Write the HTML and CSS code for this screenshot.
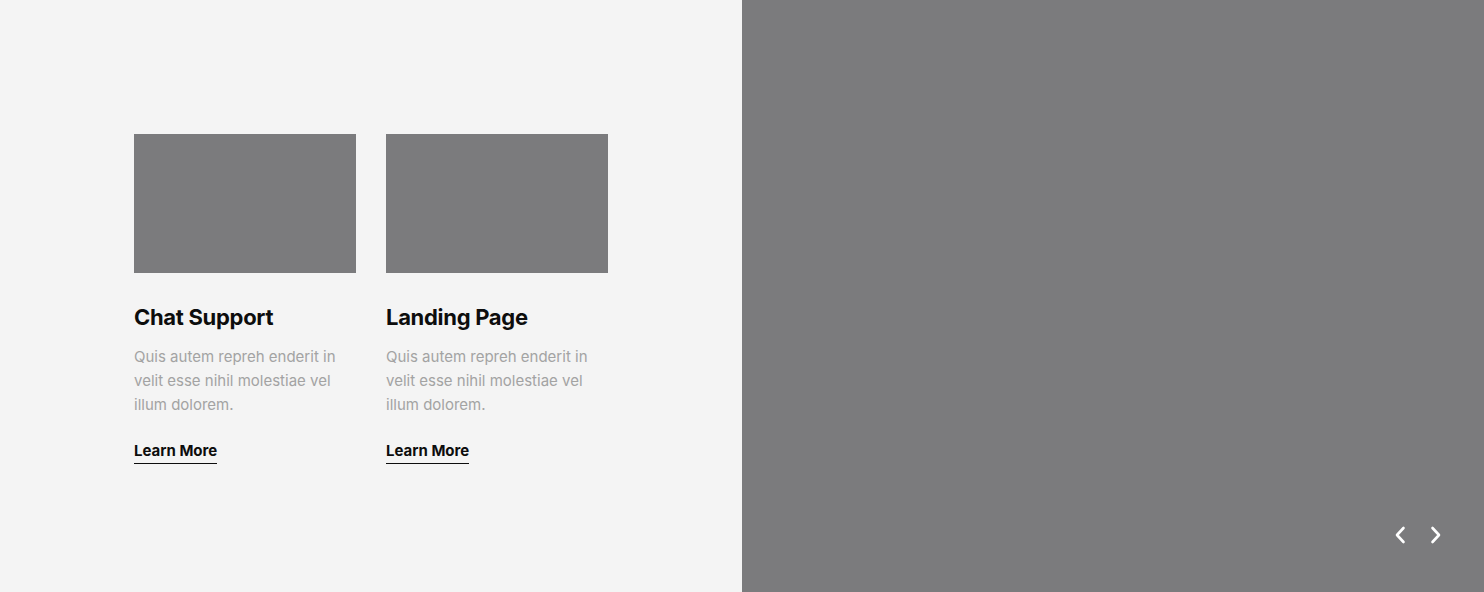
FILE: index.html
```html
<!DOCTYPE html>
<html lang="en">
<head>
<meta charset="utf-8">
<title>Services</title>
<link rel="stylesheet" href="styles.css">
</head>
<body>
<div class="page">
  <section class="left">
    <div class="cards">
      <article class="card">
        <div class="thumb"></div>
        <h3 class="title">Chat Support</h3>
        <p class="text">Quis autem repreh enderit in velit esse nihil molestiae vel illum dolorem.</p>
        <a class="more" href="#">Learn More</a>
      </article>
      <article class="card">
        <div class="thumb"></div>
        <h3 class="title">Landing Page</h3>
        <p class="text">Quis autem repreh enderit in velit esse nihil molestiae vel illum dolorem.</p>
        <a class="more" href="#">Learn More</a>
      </article>
    </div>
  </section>
  <section class="right">
    <div class="nav">
      <button class="arrow" aria-label="Previous">
        <svg width="12" height="18" viewBox="0 0 12 18"><path d="M9.5 2 L3 9 L9.5 16" fill="none" stroke="#fff" stroke-width="2.6" stroke-linecap="round" stroke-linejoin="round"/></svg>
      </button>
      <button class="arrow" aria-label="Next">
        <svg width="12" height="18" viewBox="0 0 12 18"><path d="M2.5 2 L9 9 L2.5 16" fill="none" stroke="#fff" stroke-width="2.6" stroke-linecap="round" stroke-linejoin="round"/></svg>
      </button>
    </div>
  </section>
</div>
</body>
</html>
```
FILE: styles.css
```css
* { box-sizing: border-box; }
html, body { margin: 0; padding: 0; }
body {
  font-family: Inter, "Noto Sans", "Liberation Sans", sans-serif;
  background: #f4f4f4;
}
.page {
  display: grid;
  grid-template-columns: 742px 742px;
  height: 592px;
  overflow: hidden;
}
.left {
  background: #f4f4f4;
  padding: 134px 0 0 134px;
}
.cards {
  display: grid;
  grid-template-columns: 222px 222px;
  column-gap: 30px;
}
.card { display: flex; flex-direction: column; align-items: flex-start; }
.thumb {
  width: 222px;
  height: 139px;
  background: #7b7b7d;
}
.title {
  margin: 30px 0 0;
  font-size: 22px;
  line-height: 28px;
  font-weight: 700;
  color: #0d0d0d;
  letter-spacing: -0.3px;
}
.text {
  margin: 14px 0 0;
  font-size: 15px;
  line-height: 24px;
  color: #a3a3a3;
  letter-spacing: 0;
}
.more {
  margin-top: 24px;
  font-size: 15px;
  line-height: 20px;
  font-weight: 700;
  color: #0d0d0d;
  text-decoration: none;
  padding-bottom: 2px;
  border-bottom: 1.5px solid #0d0d0d;
  letter-spacing: 0;
}
.right {
  background: #7b7b7d;
  position: relative;
}
.nav {
  position: absolute;
  right: 42px;
  bottom: 48px;
  display: flex;
  gap: 24px;
}
.arrow {
  background: none;
  border: 0;
  padding: 0;
  width: 12px;
  height: 18px;
  display: block;
  cursor: pointer;
}
.arrow svg { display: block; }
```
